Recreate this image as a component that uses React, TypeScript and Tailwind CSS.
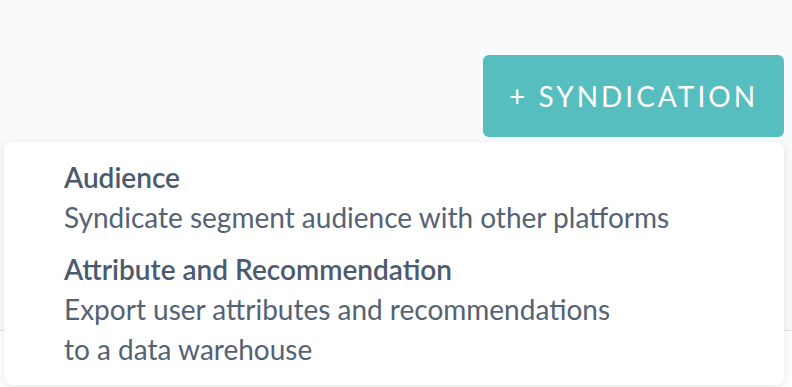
import React from "react";

export default function App() {
  const font = { fontFamily: "Lato, 'Open Sans', sans-serif" };
  return (
    <div className="relative w-[792px] h-[387px] overflow-hidden bg-[#f9fafc]" style={font}>
      <div className="flex justify-end pt-[55px] pr-2">
        <button className="h-[82px] w-[301px] rounded-[6px] bg-[#57bec0] text-white text-[28px] tracking-[3px] flex items-center justify-center">
          + SYNDICATION
        </button>
      </div>
      <div className="mt-[193px] border-t border-[#dfe2e6] bg-white h-[200px]">
        <div className="flex pt-[52px] text-[22px] font-bold text-[#222] leading-[30px]">
          <span className="w-[378px] pl-[2px]">Ov. Name</span>
          <span className="w-[300px]">Status</span>
          <span>Action</span>
        </div>
      </div>
      <div className="absolute left-[4px] right-[8px] top-[142px] h-[243px] rounded-[8px] bg-white shadow-[0_2px_10px_rgba(0,0,0,0.10)] pl-[60px] pt-[15px]">
        <div className="text-[28px] leading-[40px]">
          <div className="font-semibold text-[#4b5a6e]">Audience</div>
          <div className="text-[#556274]">Syndicate segment audience with other platforms</div>
        </div>
        <div className="mt-[12px] text-[28px] leading-[40px]">
          <div className="font-semibold text-[#4b5a6e]">Attribute and Recommendation</div>
          <div className="text-[#556274]">Export user attributes and recommendations</div>
          <div className="text-[#556274]">to a data warehouse</div>
        </div>
      </div>
    </div>
  );
}
